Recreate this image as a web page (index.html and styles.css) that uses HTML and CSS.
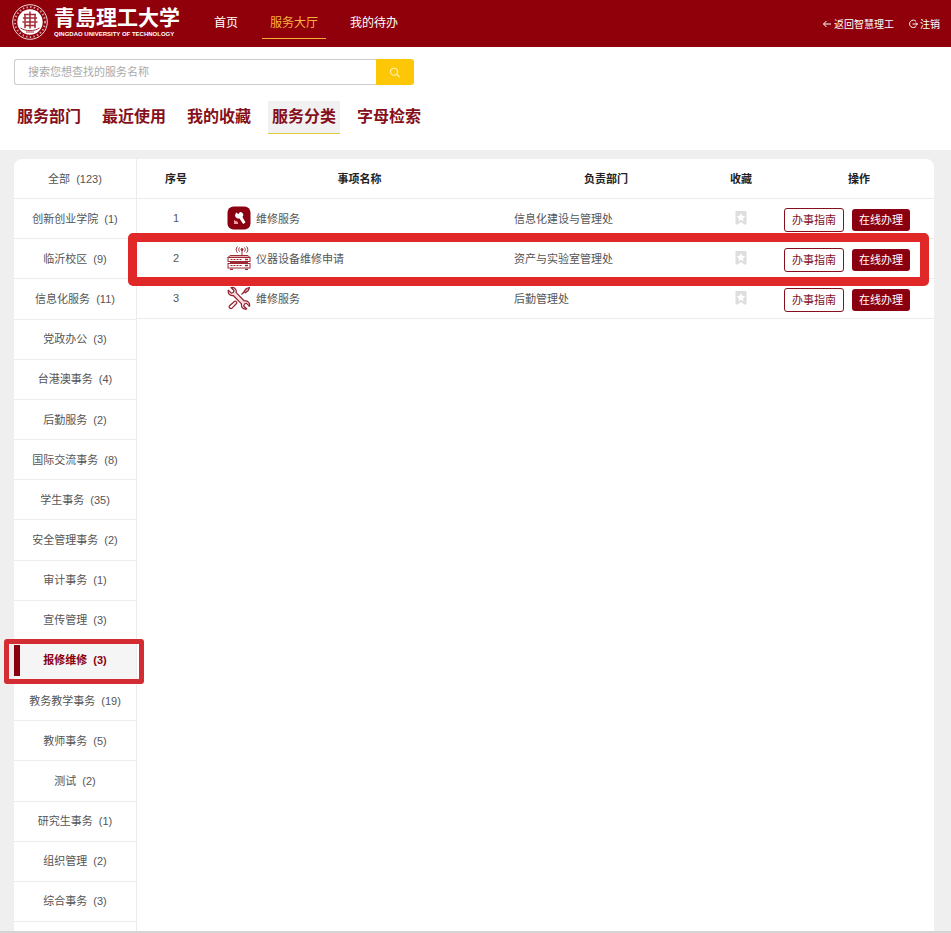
FILE: index.html
```
<!DOCTYPE html>
<html lang="zh-CN">
<head>
  <meta charset="UTF-8" />
  <meta name="viewport" content="width=device-width, initial-scale=1.0"/>
  <title>服务大厅</title>
  <link rel="stylesheet" href="styles.css">
</head>
<body>
  <svg class="sprite" aria-hidden="true">
    <symbol id="star-mark" viewBox="0 0 14 16">
      <path d="M1.500 1h11v13.500h-2L7 12l-3.500 2.500h-2z" fill="#dedede"/>
      <path d="M7 3l1.300 2.700 3 .4-2.200 2.100.6 3L7 9.700l-2.700 1.500.6-3-2.200-2.100 3-.4z" fill="#fff"/>
    </symbol>
  </svg>

  <header class="header">
    <a class="logo" href="#">
      <svg class="seal" viewBox="0 0 36 36" fill="none" stroke="#fff">
        <circle cx="18" cy="18" r="17.300" stroke-width="1" opacity=".85"/>
        <circle cx="18" cy="18" r="15" stroke-width="2" stroke-dasharray="1.500 2.200" opacity=".6"/>
        <circle cx="18" cy="18" r="12.700" fill="#fff" stroke="none"/>
        <path d="M12 10.500h12M11 14h14M10.500 18h15M13 21.500h10" stroke="#a32a35" stroke-width="1.500"/>
        <path d="M13 10v7M23 10v7M18 7.500v17M13 18v6M23 18v6" stroke="#a32a35" stroke-width="1.500"/>
        <path d="M8.500 24c5 3.500 14 3.500 19 0" stroke="#a32a35" stroke-width="1"/>
        <path d="M14 28h8" stroke="#a32a35" stroke-width="1"/>
      </svg>
      <span class="logo-text">
        <span class="logo-name">青島理工大学</span>
        <span class="logo-en">QINGDAO UNIVERSITY OF TECHNOLOGY</span>
      </span>
    </a>
    <nav class="nav">
      <a href="#">首页</a>
      <a href="#" class="active">服务大厅</a>
      <a href="#">我的待办</a>
    </nav>
    <div class="user-links">
      <a href="#">
        <svg viewBox="0 0 10 10" fill="none" stroke="currentColor"><path d="M9 5H1.500M4.500 2L1.500 5l3 3"/></svg>返回智慧理工
      </a>
      <a href="#">
        <svg viewBox="0 0 10 10" fill="none" stroke="currentColor"><path d="M8 2.300A3.700 3.700 0 1 0 8.300 7M4.500 5h5M8 3.500L9.500 5 8 6.500"/></svg>注销
      </a>
    </div>
  </header>

  <section class="top">
    <form class="search">
      <input type="text" name="keyword" placeholder="搜索您想查找的服务名称" aria-label="搜索服务" />
      <button type="submit" aria-label="搜索">
        <svg viewBox="0 0 12 12" fill="none" stroke="#fff3b8" stroke-width="1.100"><circle cx="5" cy="4.700" r="3.500"/><path d="M7.700 7.300L10.500 10"/></svg>
      </button>
    </form>
    <nav class="tabs">
      <a href="#">服务部门</a>
      <a href="#">最近使用</a>
      <a href="#">我的收藏</a>
      <a href="#" class="active">服务分类</a>
      <a href="#">字母检索</a>
    </nav>
  </section>

  <main class="content">
    <div class="card">
      <ul class="categories">
        <li><a href="#">全部&nbsp; (123)</a></li>
        <li><a href="#">创新创业学院&nbsp; (1)</a></li>
        <li><a href="#">临沂校区&nbsp; (9)</a></li>
        <li><a href="#">信息化服务&nbsp; (11)</a></li>
        <li><a href="#">党政办公&nbsp; (3)</a></li>
        <li><a href="#">台港澳事务&nbsp; (4)</a></li>
        <li><a href="#">后勤服务&nbsp; (2)</a></li>
        <li><a href="#">国际交流事务&nbsp; (8)</a></li>
        <li><a href="#">学生事务&nbsp; (35)</a></li>
        <li><a href="#">安全管理事务&nbsp; (2)</a></li>
        <li><a href="#">审计事务&nbsp; (1)</a></li>
        <li><a href="#">宣传管理&nbsp; (3)</a></li>
        <li class="active"><a href="#">报修维修&nbsp; (3)</a><span class="marker"></span></li>
        <li><a href="#">教务教学事务&nbsp; (19)</a></li>
        <li><a href="#">教师事务&nbsp; (5)</a></li>
        <li><a href="#">测试&nbsp; (2)</a></li>
        <li><a href="#">研究生事务&nbsp; (1)</a></li>
        <li><a href="#">组织管理&nbsp; (2)</a></li>
        <li><a href="#">综合事务&nbsp; (3)</a></li>
      </ul>

      <div class="services">
        <table>
          <thead>
            <tr>
              <th class="col-no">序号</th>
              <th class="col-name">事项名称</th>
              <th class="col-dept">负责部门</th>
              <th class="col-fav">收藏</th>
              <th class="col-action">操作</th>
            </tr>
          </thead>
          <tbody>
            <tr>
              <td class="col-no">1</td>
              <td class="col-name">
                <div class="service">
                  <svg viewBox="0 0 24 24">
                    <rect x="0.500" y="0.500" width="23" height="23" rx="6" fill="#8a0010"/>
                    <path d="M9 6.500l2.500 1.500 1.500-2c2 0 3.500 1.500 3.300 3.500l-.8 1.500 3 5.500-2.300 1.500-3.700-5.500c-2 .3-4-.5-4.500-3z" fill="#fff"/>
                    <path d="M7 14l4 2v2H7z" fill="#ef9aa0"/>
                  </svg>维修服务
                </div>
              </td>
              <td class="col-dept">信息化建设与管理处</td>
              <td class="col-fav"><button class="fav" aria-label="收藏"><svg><use href="#star-mark"/></svg></button></td>
              <td class="col-action"><div class="actions"><button class="guide">办事指南</button><button class="handle">在线办理</button></div></td>
            </tr>
            <tr class="marked">
              <td class="col-no">2<span class="marker"></span></td>
              <td class="col-name">
                <div class="service">
                  <svg viewBox="0 0 24 24" fill="none" stroke="#9c2a35">
                    <path d="M15 3v8M12.500 1.500c-1 1.200-1 3 0 4.200M17.500 1.500c1 1.200 1 3 0 4.200M10.500.5c-1.800 1.800-1.800 4.500 0 6.300M19.500.5c1.800 1.800 1.800 4.500 0 6.300"/>
                    <circle cx="15" cy="3.500" r="1" fill="#9c2a35"/>
                    <path d="M3 9.500h18l2 2H1z" fill="#e9b3b7"/>
                    <rect x="1" y="11.500" width="22" height="4"/>
                    <rect x="1" y="17.500" width="22" height="4.500"/>
                    <path d="M3.500 13.500h11M3.500 19.500h11" stroke-dasharray="2 1"/>
                    <path d="M18 13.500h3M18 19.500h3M3 16.500h18M3 23.300h3M18 23.300h3" stroke-width="1.300"/>
                  </svg>仪器设备维修申请
                </div>
              </td>
              <td class="col-dept">资产与实验室管理处</td>
              <td class="col-fav"><button class="fav" aria-label="收藏"><svg><use href="#star-mark"/></svg></button></td>
              <td class="col-action"><div class="actions"><button class="guide">办事指南</button><button class="handle">在线办理</button></div></td>
            </tr>
            <tr>
              <td class="col-no">3</td>
              <td class="col-name">
                <div class="service">
                  <svg viewBox="0 0 24 24" fill="none" stroke="#93202c" stroke-width="1.200" stroke-linejoin="round">
                    <path d="M4 1.500l3 3-.7 2-2 .7-3-3c-.7 3 1.200 6 5 5.300l8.200 8.300c-.7 3.500 2 6 5.300 5.200l-3-3 .7-2 2-.7 3 3c.7-3.500-1.800-6-5.200-5.300L9.200 6.700C9.800 3.300 7.500.8 4 1.500z" fill="#f6dfe1"/>
                    <path d="M22.500 1.500l-3 1-2.500 3 1.300 1.300 3-2.300zM17 6l-2.500 2.500" fill="#e8b4b8"/>
                    <path d="M7.500 15.500c1-1 3 .8 2 2l-4.500 4.700c-1.300 1.300-3.800-1-2.500-2.400z"/>
                  </svg>维修服务
                </div>
              </td>
              <td class="col-dept">后勤管理处</td>
              <td class="col-fav"><button class="fav" aria-label="收藏"><svg><use href="#star-mark"/></svg></button></td>
              <td class="col-action"><div class="actions"><button class="guide">办事指南</button><button class="handle">在线办理</button></div></td>
            </tr>
          </tbody>
        </table>
      </div>
    </div>
  </main>
</body>
</html>
```
FILE: styles.css
```
* {
  box-sizing: border-box;
}

body {
  margin: 0;
  min-height: 100vh;
  display: flex;
  flex-direction: column;
  font-family: "Liberation Sans", "Noto Sans CJK SC", sans-serif;
  font-size: 11px;
  color: #555;
  background: #efefef;
}

a {
  color: inherit;
  text-decoration: none;
}

button,
input {
  font-family: inherit;
  font-size: inherit;
}

button {
  cursor: pointer;
}

.sprite {
  display: none;
}

/* header */
.header {
  display: flex;
  align-items: center;
  height: 47px;
  padding: 0 11px 0 12px;
  background: #8f000b;
  color: #fff;
}

.logo {
  display: flex;
  align-items: center;
  gap: 6px;
  width: 194px;
  padding-bottom: 3px;
}

.seal {
  width: 36px;
  height: 36px;
}

.logo-text {
  display: flex;
  flex-direction: column;
  white-space: nowrap;
}

.logo-name {
  font-size: 21px;
  font-weight: bold;
  line-height: 24px;
}

.logo-en {
  font-size: 6px;
  font-weight: bold;
  line-height: 8px;
}

.nav {
  display: flex;
  gap: 16px;
  font-size: 12px;
}

.nav a {
  padding: 0 8px;
  line-height: 30px;
  border-bottom: 1px solid transparent;
}

.nav .active {
  color: #f9b23c;
  border-color: #f9b23c;
}

.user-links {
  display: flex;
  gap: 14px;
  margin-left: auto;
  font-size: 10px;
}

.user-links a {
  display: flex;
  align-items: center;
  gap: 2px;
}

.user-links svg {
  width: 10px;
  height: 10px;
}

/* search + tabs */
.top {
  padding: 12px 14px 16px;
  background: #fff;
}

.search {
  display: flex;
  width: 400px;
  max-width: 100%;
  height: 26px;
}

.search input {
  flex: 1;
  min-width: 0;
  padding: 0 13px;
  border: 1px solid #ccc;
  border-right: none;
  border-radius: 3px 0 0 3px;
  outline: none;
}

.search input::placeholder {
  color: #aaa;
}

.search button {
  width: 38px;
  padding: 0;
  border: none;
  border-radius: 0 3px 3px 0;
  background: #fdc708;
}

.search svg {
  width: 12px;
  height: 12px;
  vertical-align: middle;
}

.tabs {
  display: flex;
  gap: 13px;
  margin: 16px 0 0 -1px;
  font-size: 16px;
  font-weight: bold;
  color: #85101b;
}

.tabs a {
  padding: 0 4px;
  line-height: 32px;
  border-bottom: 1px solid transparent;
}

.tabs .active {
  background: #f1f1f1;
  border-color: #e0c93a;
}

/* content */
.content {
  flex: 1;
  display: flex;
  padding: 9px 17px 0 14px;
  border-bottom: 2px solid #d4d4d4;
}

.card {
  flex: 1;
  display: flex;
  min-width: 0;
  background: #fff;
  border-radius: 8px 8px 0 0;
}

.categories {
  display: flex;
  flex-direction: column;
  width: 123px;
  margin: 0;
  padding: 0 0 9px;
  list-style: none;
  border-right: 1px solid #ececec;
}

.categories li {
  flex: 1 0 40px;
  display: flex;
  position: relative;
  border-bottom: 1px solid #ececec;
}

.categories a {
  flex: 1;
  display: flex;
  align-items: center;
  justify-content: center;
  padding-bottom: 2px;
}

.categories .active {
  background: #f5f5f5;
  color: #8a0010;
  font-weight: bold;
}

.categories .active a {
  margin: 4px 0;
  padding-right: 6px;
  border-left: 6px solid #8a0010;
}

.services {
  flex: 1;
  min-width: 0;
}

table {
  width: 100%;
  table-layout: fixed;
  border-collapse: separate;
  border-spacing: 0;
}

th,
td {
  height: 40px;
  padding: 0 0 2px;
  border-bottom: 1px solid #ececec;
}

th {
  color: #222;
}

.col-no {
  width: 78px;
  text-align: center;
}

.col-dept {
  width: 204px;
}

td.col-dept {
  padding-left: 10px;
}

.col-fav {
  width: 66px;
  text-align: center;
}

.col-action {
  width: 160px;
  padding-left: 10px;
}

td.col-name {
  padding-left: 12px;
}

.service {
  display: flex;
  align-items: center;
  gap: 5px;
}

.service svg {
  width: 24px;
  height: 24px;
}

.fav {
  padding: 0;
  border: none;
  background: none;
}

.fav svg {
  width: 14px;
  height: 16px;
  vertical-align: middle;
}

.actions {
  display: flex;
  align-items: center;
  gap: 8px;
  padding-top: 4px;
}

.actions button {
  padding: 0 7px 2px;
  border-radius: 3px;
  white-space: nowrap;
}

.actions .guide {
  height: 24px;
  border: 1px solid #85101b;
  background: #fff;
  color: #85101b;
}

.actions .handle {
  height: 22px;
  border: none;
  background: #8a0010;
  color: #fff;
}

/* red frames */
.marked {
  position: relative;
}

.marker {
  position: absolute;
  z-index: 1;
  pointer-events: none;
}

.marked .marker {
  inset: -6px 5px -7px -9px;
  border: 9px solid #e02829;
  border-radius: 5px;
}

.categories .marker {
  inset: -2px -8px -4px -10px;
  border: 5px solid #d32c33;
  border-radius: 3px;
}
```
